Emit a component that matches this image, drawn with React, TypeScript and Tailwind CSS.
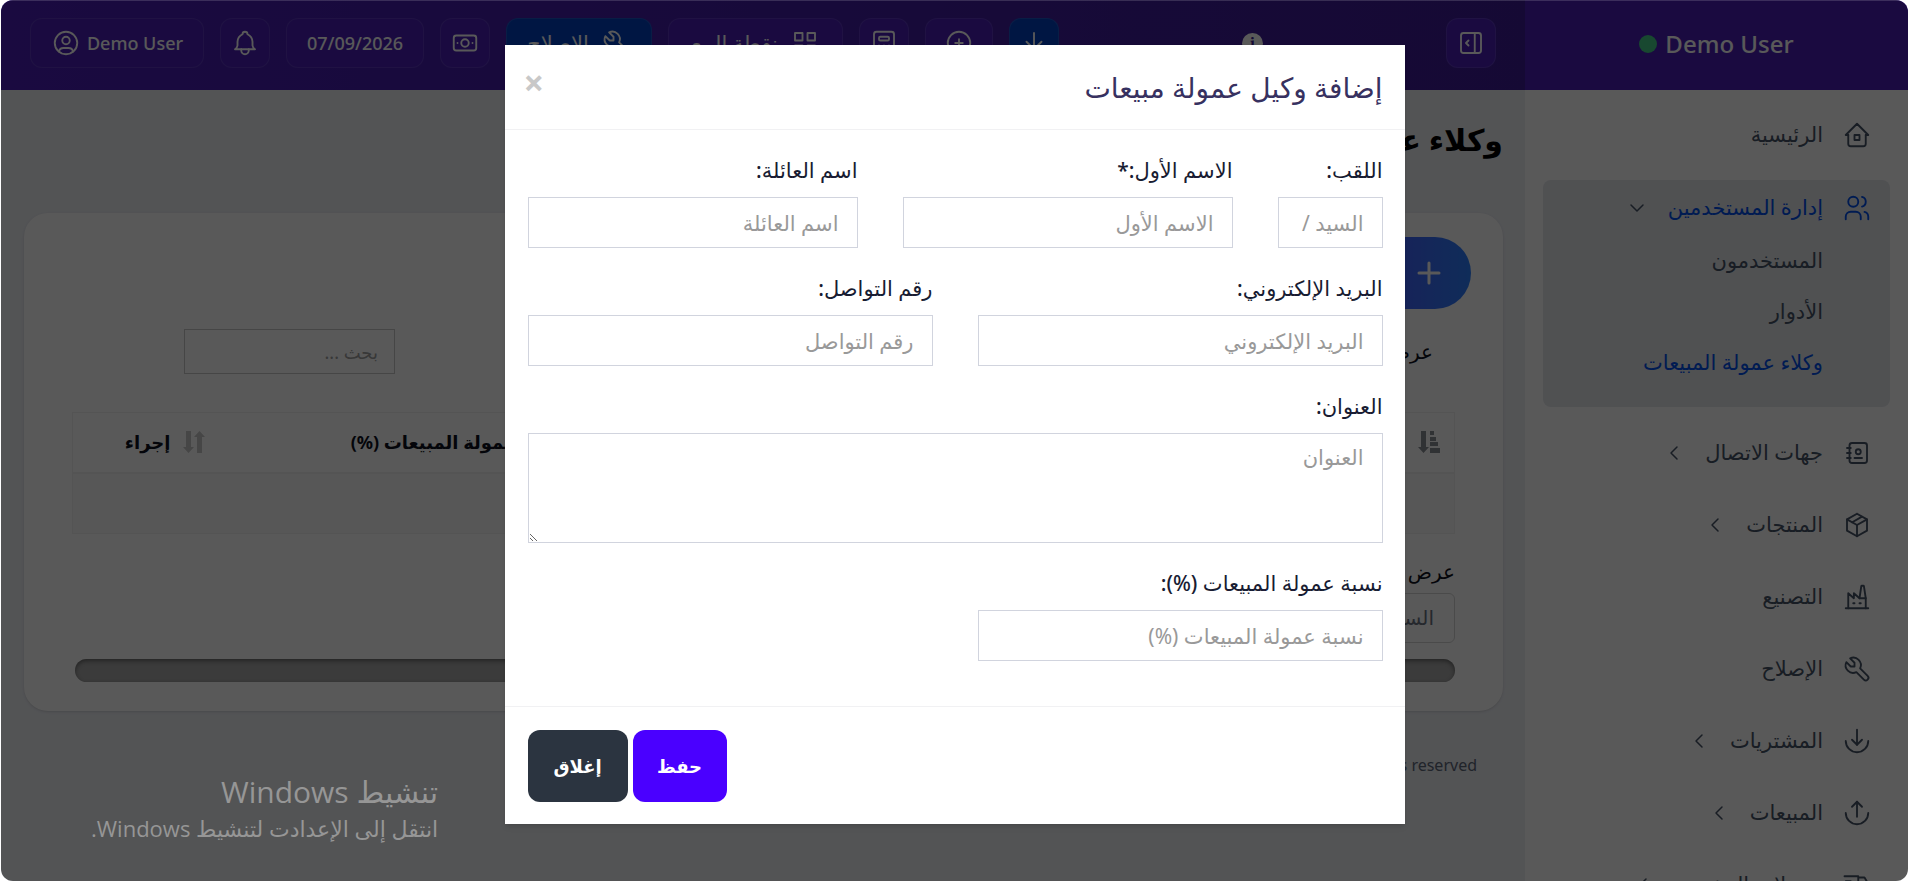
import type { ReactNode } from 'react';

type IconProps = { paths: string[]; className?: string };

// 24x24 outline icons
const icons = {
  home: ['M5 12H3l9-9 9 9h-2', 'M5 12v7a2 2 0 0 0 2 2h10a2 2 0 0 0 2-2v-7', 'M10 12h4v4h-4z'],
  users: [
    'M5 7a4 4 0 1 0 8 0a4 4 0 1 0-8 0',
    'M3 21v-2a4 4 0 0 1 4-4h4a4 4 0 0 1 4 4v2',
    'M16 3.13a4 4 0 0 1 0 7.75',
    'M21 21v-2a4 4 0 0 0-3-3.85',
  ],
  contacts: [
    'M20 6v12a2 2 0 0 1-2 2H8a2 2 0 0 1-2-2V6a2 2 0 0 1 2-2h10a2 2 0 0 1 2 2z',
    'M10 16h6',
    'M11 11a2 2 0 1 0 4 0a2 2 0 1 0-4 0',
    'M4 8h3M4 12h3M4 16h3',
  ],
  box: [
    'M12 3l8 4.5v9l-8 4.5-8-4.5v-9l8-4.5',
    'M12 12l8-4.5',
    'M8.200 9.800L16 5.300',
    'M12 12v9M12 12L4 7.500',
  ],
  factory: [
    'M3 21h18',
    'M5 21V9l4.500 4V9l4.500 4h5',
    'M19 21v-8l-1.436-9.574A.5.5 0 0 0 17.069 3h-1.145a.5.5 0 0 0-.494.418L14 13',
    'M9 17h1M14 17h1',
  ],
  tool: ['M7 10h3V7L6.500 3.500a6 6 0 0 1 8 8l6 6a2 2 0 0 1-3 3l-6-6a6 6 0 0 1-8-8L7 10'],
  down: ['M12 3v12', 'M16 11l-4 4-4-4', 'M3 12a9 9 0 0 0 18 0'],
  up: ['M12 15V3', 'M16 7l-4-4-4 4', 'M3 12a9 9 0 0 0 18 0'],
  truck: [
    'M5 17a2 2 0 1 0 4 0a2 2 0 1 0-4 0M15 17a2 2 0 1 0 4 0a2 2 0 1 0-4 0',
    'M5 17H3v-4M2 5h11v12m-4 0h6m4 0h2v-6h-8m0-5h5l3 5',
    'M3 9h4',
  ],
  userCircle: [
    'M3 12a9 9 0 1 0 18 0a9 9 0 1 0-18 0',
    'M9 10a3 3 0 1 0 6 0a3 3 0 1 0-6 0',
    'M6.168 18.849A4 4 0 0 1 10 16h4a4 4 0 0 1 3.834 2.855',
  ],
  bell: [
    'M10 5a2 2 0 1 1 4 0a7 7 0 0 1 4 6v3a4 4 0 0 0 2 3H4a4 4 0 0 0 2-3v-3a7 7 0 0 1 4-6',
    'M9 17v1a3 3 0 0 0 6 0v-1',
  ],
  cash: [
    'M9 12a3 3 0 1 0 6 0a3 3 0 1 0-6 0',
    'M3 8a2 2 0 0 1 2-2h14a2 2 0 0 1 2 2v8a2 2 0 0 1-2 2H5a2 2 0 0 1-2-2z',
    'M18 12h.01M6 12h.01',
  ],
  grid: ['M4 4h6v6H4zM14 4h6v6h-6zM4 14h6v6H4zM14 14h6v6h-6z'],
  calculator: [
    'M4 5a2 2 0 0 1 2-2h12a2 2 0 0 1 2 2v14a2 2 0 0 1-2 2H6a2 2 0 0 1-2-2z',
    'M8 8a1 1 0 0 1 1-1h6a1 1 0 0 1 1 1v1a1 1 0 0 1-1 1H9a1 1 0 0 1-1-1z',
    'M8 14v.01M12 14v.01M16 14v.01M8 17v.01M12 17v.01M16 17v.01',
  ],
  plusCircle: ['M3 12a9 9 0 1 0 18 0a9 9 0 1 0-18 0', 'M9 12h6M12 9v6'],
  download: ['M12 4v13', 'M6 11l6 6 6-6', 'M4 21h16'],
  sidebar: [
    'M4 6a2 2 0 0 1 2-2h12a2 2 0 0 1 2 2v12a2 2 0 0 1-2 2H6a2 2 0 0 1-2-2z',
    'M15 4v16',
    'M10 10l-2 2 2 2',
  ],
  chevronLeft: ['M15 6l-6 6 6 6'],
  chevronDown: ['M6 9l6 6 6-6'],
};

function Icon({ paths, className = 'size-[30px]' }: IconProps) {
  return (
    <svg viewBox="0 0 24 24" fill="none" stroke="currentColor" strokeWidth="1.5" strokeLinecap="round" strokeLinejoin="round" className={`shrink-0 ${className}`} aria-hidden="true">
      {paths.map((d) => (
        <path key={d} d={d} />
      ))}
    </svg>
  );
}

const menu = [
  { label: 'جهات الاتصال', icon: icons.contacts, more: true },
  { label: 'المنتجات', icon: icons.box, more: true },
  { label: 'التصنيع', icon: icons.factory, more: false },
  { label: 'الإصلاح', icon: icons.tool, more: false },
  { label: 'المشتريات', icon: icons.down, more: true },
  { label: 'المبيعات', icon: icons.up, more: true },
  { label: 'تحويلات المخزون', icon: icons.truck, more: true },
];

function Sidebar() {
  return (
    <aside className="flex w-[383px] shrink-0 flex-col overflow-hidden bg-white text-[21px] text-[#475467]">
      <div className="flex h-[90px] shrink-0 items-center justify-center gap-2 bg-[#4a1fb8] pb-0.5 text-2xl font-medium text-white" dir="ltr">
        <span className="size-[18px] rounded-full bg-[#47cd89]" />
        Demo User
      </div>
      <nav className="flex flex-col pt-[9px]">
        <a href="#" className="flex h-[72px] shrink-0 items-center gap-[19px] ps-9">
          <Icon paths={icons.home} />
          الرئيسية
        </a>
        <div className="mx-[18px] mt-[9px] mb-[10px] shrink-0 rounded-lg bg-[#e4e7ec] ps-[18px] pb-[19px]">
          <a href="#" className="flex h-[55px] items-center gap-[19px] text-[#004eeb]">
            <Icon paths={icons.users} />
            إدارة المستخدمين
            <Icon paths={icons.chevronDown} className="size-6 text-[#475467]" />
          </a>
          <a href="#" className="flex h-[51px] items-center ps-[49px]">المستخدمون</a>
          <a href="#" className="flex h-[51px] items-center ps-[49px]">الأدوار</a>
          <a href="#" className="flex h-[51px] items-center ps-[49px] text-[#004eeb]">وكلاء عمولة المبيعات</a>
        </div>
        {menu.map((item) => (
          <a key={item.label} href="#" className="flex h-[72px] shrink-0 items-center gap-[19px] ps-9">
            <Icon paths={item.icon} />
            {item.label}
            {item.more && <Icon paths={icons.chevronLeft} className="size-6" />}
          </a>
        ))}
      </nav>
    </aside>
  );
}

const headerButton = 'flex h-[50px] items-center justify-center rounded-xl border border-white/10 bg-[#4a1fb8]';
const blueButton = 'flex h-[50px] items-center justify-center rounded-xl border border-white/10 bg-[#0040c1]';

function Header() {
  return (
    <header className="flex h-[90px] shrink-0 items-center justify-between bg-linear-to-l from-[#3e1c96] to-[#4a1fb8] ps-[29px] pe-[29px] pb-1 text-lg font-medium text-white">
      <button aria-label="القائمة" className={`${headerButton} w-[50px]`}>
        <Icon paths={icons.sidebar} />
      </button>
      <span className="flex size-[21px] items-center justify-center rounded-full bg-white font-serif text-base font-bold text-[#3e1c96]">i</span>
      <div className="flex gap-4">
        <button aria-label="تنزيل" className={`${blueButton} w-[50px]`}>
          <Icon paths={icons.download} />
        </button>
        <button aria-label="إضافة" className={`${headerButton} w-[68px]`}>
          <Icon paths={icons.plusCircle} />
        </button>
        <button aria-label="الآلة الحاسبة" className={`${headerButton} w-[50px]`}>
          <Icon paths={icons.calculator} />
        </button>
        <button className={`${headerButton} w-[175px] gap-3 text-[21px]`}>
          <Icon paths={icons.grid} />
          نقطة البيع
        </button>
        <button className={`${blueButton} w-[146px] gap-3 text-[21px]`}>
          <Icon paths={icons.tool} />
          الإصلاح
        </button>
        <button aria-label="النقدية" className={`${headerButton} w-[50px]`}>
          <Icon paths={icons.cash} />
        </button>
        <button className={`${headerButton} w-[138px]`}>07/09/2026</button>
        <button aria-label="الإشعارات" className={`${headerButton} w-[50px]`}>
          <Icon paths={icons.bell} />
        </button>
        <button className={`${headerButton} w-[174px] gap-1.5`} dir="ltr">
          <Icon paths={icons.userCircle} />
          Demo User
        </button>
      </div>
    </header>
  );
}

function SortIcon({ active = false }: { active?: boolean }) {
  return active ? (
    <svg viewBox="0 0 22 22" className="size-[22px] shrink-0" fill="#8b8f96" aria-hidden="true">
      <path d="M3 0h5v16h3l-5.500 6L0 16h3zM12 0h4v4h-4zM12 6h6v4h-6zM12 11h8v4h-8zM12 17h10v5H12z" />
    </svg>
  ) : (
    <svg viewBox="0 0 22 22" className="size-[22px] shrink-0" fill="#c8c8c8" aria-hidden="true">
      <path d="M3 0h5v16h3l-5.500 6L0 16h3zM14 22V6h-3l5.500-6L22 6h-3v16z" />
    </svg>
  );
}

const columns = ['الاسم', 'البريد الإلكتروني', 'رقم التواصل', 'العنوان', 'نسبة عمولة المبيعات (%)', 'إجراء'];

function AgentsPage() {
  return (
    <main className="flex flex-col ps-[22px] pe-[23px]">
      <h1 className="pt-7 text-3xl leading-[44px] font-bold text-black">وكلاء عمولة المبيعات</h1>
      <section className="mt-[51px] rounded-3xl bg-white px-12 pt-6 pb-[29px] text-[#0c111d] shadow-sm">
        <button aria-label="إضافة" className="-ms-4 flex h-[72px] w-[164px] items-center rounded-full bg-linear-to-l from-blue-500 to-indigo-600 ps-[30px] text-white">
          <svg viewBox="0 0 24 24" className="size-6" stroke="currentColor" strokeWidth="3" strokeLinecap="round" aria-hidden="true">
            <path d="M12 2v20M2 12h20" />
          </svg>
        </button>
        <div className="mt-5 flex h-[45px] items-center justify-between ps-[22px] pe-28">
          <label className="flex items-center gap-2 text-xl">
            عرض
            <select className="h-10 border border-gray-300 px-3 text-base">
              <option>25</option>
            </select>
          </label>
          <input aria-label="بحث" placeholder="بحث ..." className="h-[45px] w-[211px] border border-[#c8c8c8] px-4 text-lg placeholder:text-[#a0a0a0]" />
        </div>
        <table className="mt-[38px] w-full table-fixed border border-[#f0f0f0] text-lg">
          <colgroup>
            <col />
            <col />
            <col />
            <col />
            <col className="w-[394px]" />
            <col className="w-[146px]" />
          </colgroup>
          <thead>
            <tr className="h-[60px] border-b-2 border-[#f0f0f0]">
              {columns.map((name, i) => (
                <th key={name} className="ps-3.5 text-start font-bold whitespace-nowrap">
                  <span className="flex items-center gap-3">
                    <SortIcon active={i === 0} />
                    {name}
                  </span>
                </th>
              ))}
            </tr>
          </thead>
          <tbody>
            <tr className="h-[61px] bg-[#f9f9f9]">
              <td colSpan={6} />
            </tr>
          </tbody>
        </table>
        <label htmlFor="export" className="mt-5 mb-[3px] block text-xl leading-9">عرض</label>
        <select id="export" className="block h-[50px] w-[130px] appearance-none rounded-md border border-[#d5d5d5] px-5 text-xl text-gray-500">
          <option>السجل</option>
        </select>
        <div className="mt-4 me-[3px] h-[23px] rounded-full bg-[#a8a8a8] inset-shadow-sm inset-shadow-black/40" />
      </section>
      <footer className="mt-10 ps-[26px] text-base leading-7 text-[#5d6779]">
        <span dir="ltr">Copyright © 2026 All rights reserved</span>
      </footer>
    </main>
  );
}

const inputClass = 'h-[51px] w-full min-w-0 border border-[#d1d4de] bg-white px-[18px] text-[21px] text-[#181c32] placeholder:text-[#999]';

function Field({ id, label, children }: { id: string; label: string; children: ReactNode }) {
  return (
    <div className="min-w-0">
      <label htmlFor={id} className="mb-[10px] block text-[21px] leading-[34px] font-medium whitespace-nowrap text-[#181c32]">
        {label}
      </label>
      {children}
    </div>
  );
}

function AgentModal() {
  return (
    <form role="dialog" aria-labelledby="modal-title" className="w-full max-w-[900px] bg-white shadow-md">
      <div className="flex h-[85px] items-center justify-between border-b border-[#f1f1f3] ps-[22px] pe-[19px]">
        <h2 id="modal-title" className="text-[28px] text-[#373160]">إضافة وكيل عمولة مبيعات</h2>
        <button type="button" aria-label="إغلاق النافذة" className="pb-2 text-4xl leading-8 font-bold text-[#c8c8c8]">×</button>
      </div>
      <div className="flex flex-col gap-[23px] ps-[22px] pe-[23px] pt-[23px] pb-[45px]">
        <div className="grid grid-cols-[105px_1fr_1fr] gap-[45px]">
          <Field id="prefix" label="اللقب:">
            <input id="prefix" placeholder="السيد / السيدة / الآنسة" className={inputClass} />
          </Field>
          <Field id="first-name" label="الاسم الأول:*">
            <input id="first-name" required placeholder="الاسم الأول" className={inputClass} />
          </Field>
          <Field id="last-name" label="اسم العائلة:">
            <input id="last-name" placeholder="اسم العائلة" className={inputClass} />
          </Field>
        </div>
        <div className="grid grid-cols-2 gap-[45px]">
          <Field id="email" label="البريد الإلكتروني:">
            <input id="email" placeholder="البريد الإلكتروني" className={inputClass} />
          </Field>
          <Field id="phone" label="رقم التواصل:">
            <input id="phone" placeholder="رقم التواصل" className={inputClass} />
          </Field>
        </div>
        <Field id="address" label="العنوان:">
          <textarea id="address" placeholder="العنوان" className="block h-[110px] w-full border border-[#d1d4de] px-[18px] py-2 text-[21px] placeholder:text-[#999]" />
        </Field>
        <div className="grid grid-cols-2 gap-[45px]">
          <Field id="percent" label="نسبة عمولة المبيعات (%):">
            <input id="percent" placeholder="نسبة عمولة المبيعات (%)" className={inputClass} />
          </Field>
        </div>
      </div>
      <div className="flex justify-end gap-[5px] border-t border-[#f1f1f3] ps-[22px] pe-[23px] pt-[23px] pb-[22px] text-lg font-bold text-white">
        <button className="h-[72px] w-[94px] rounded-xl bg-[#4a00ff]">حفظ</button>
        <button type="button" className="h-[72px] w-[100px] rounded-xl bg-[#2b3440]">إغلاق</button>
      </div>
    </form>
  );
}

export default function App() {
  return (
    <div dir="rtl" className="h-screen bg-white pl-px font-['Noto_Sans','DejaVu_Sans',sans-serif]">
      <div className="relative flex h-full overflow-hidden rounded-xl bg-[#edeff4]">
        <Sidebar />
        <div className="flex min-w-0 flex-1 flex-col">
          <Header />
          <AgentsPage />
        </div>
        <div className="absolute inset-0 flex items-start justify-center overflow-hidden border-t border-white/15 bg-black/65 pt-11">
          <AgentModal />
        </div>
        <div className="absolute bottom-[37px] left-[90px] font-['Open_Sans','DejaVu_Sans',sans-serif] text-[#969696]">
          <p className="text-3xl leading-10">تنشيط Windows</p>
          <p className="text-[22px] leading-8">انتقل إلى الإعدادت لتنشيط Windows.</p>
        </div>
      </div>
    </div>
  );
}
